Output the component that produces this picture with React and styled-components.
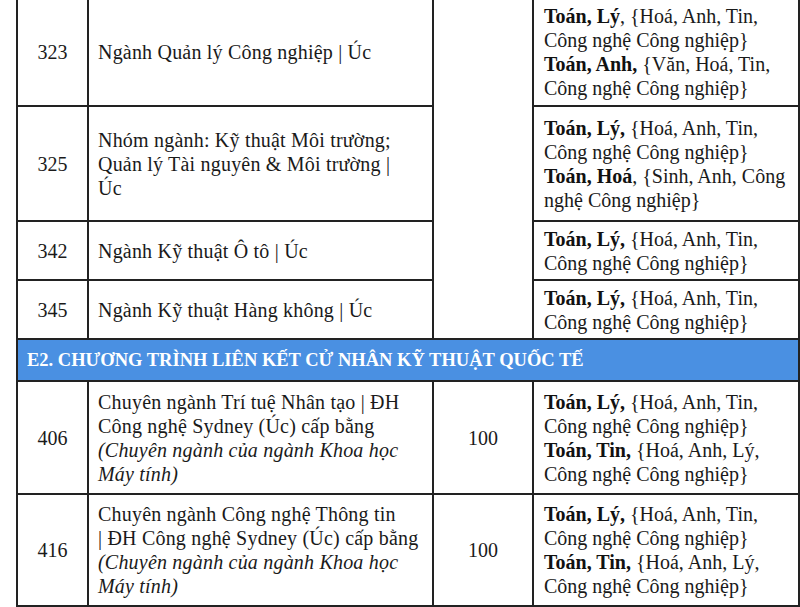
import React from "react";
import styled, { createGlobalStyle } from "styled-components";

const Global = createGlobalStyle`
  html, body { margin: 0; padding: 0; background: #fff; }
  body { overflow: hidden; }
`;

const Page = styled.div`
  width: 800px;
  height: 607px;
  overflow: hidden;
  background: #fff;
`;

const Table = styled.table`
  margin: -4px 0 0 16px;
  width: 782px;
  border-collapse: collapse;
  table-layout: fixed;
  font-family: "Liberation Serif", "DejaVu Serif", serif;
  font-size: 20px;
  line-height: 24px;
  color: #1a1a1a;
  border: 2px solid #222;
`;

const Col = styled.col`
  width: ${(p) => p.$w}px;
`;

const Row = styled.tr`
  height: ${(p) => p.$h}px;
`;

const Cell = styled.td`
  border: 2px solid #222;
  vertical-align: middle;
  padding: 4px 9px;
`;

const CodeCell = styled(Cell)`
  text-align: center;
`;

const NameCell = styled(Cell)`
  text-align: left;
  white-space: nowrap;
  letter-spacing: 0.2px;
`;

const QuotaCell = styled(Cell)`
  text-align: center;
`;

const SubjectCell = styled(Cell)`
  padding-left: 10px;
  white-space: nowrap;
`;

const SectionCell = styled.td`
  border: 2px solid #222;
  background: #4a90e2;
  color: #fff;
  font-size: 18.5px;
  font-weight: 700;
  padding: 0 9px;
  white-space: nowrap;
`;

const B = styled.b`
  font-weight: 700;
  color: #111;
`;

const I = styled.i`
  font-style: italic;
`;

const Line = styled.div``;

const Subjects = ({ groups }) => (
  <>
    {groups.map((g, i) =>
      g.map((l, j) => (
        <Line key={i + "-" + j}>
          {l.b && <B>{l.b}</B>}
          {l.t}
        </Line>
      ))
    )}
  </>
);

const CNCN = "Công nghệ Công nghiệp}";

export default function App() {
  return (
    <Page>
      <Global />
      <Table>
        <colgroup>
          <Col $w={71} />
          <Col $w={345} />
          <Col $w={100} />
          <Col $w={266} />
        </colgroup>
        <tbody>
          <Row $h={109}>
            <CodeCell>323</CodeCell>
            <NameCell>Ngành Quản lý Công nghiệp | Úc</NameCell>
            <QuotaCell rowSpan={4} />
            <SubjectCell>
              <Subjects
                groups={[
                  [{ b: "Toán, Lý", t: ", {Hoá, Anh, Tin," }, { t: CNCN }],
                  [{ b: "Toán, Anh,", t: " {Văn, Hoá, Tin," }, { t: CNCN }],
                ]}
              />
            </SubjectCell>
          </Row>
          <Row $h={115}>
            <CodeCell>325</CodeCell>
            <NameCell>
              Nhóm ngành: Kỹ thuật Môi trường;
              <br />
              Quản lý Tài nguyên &amp; Môi trường |
              <br />
              Úc
            </NameCell>
            <SubjectCell>
              <Subjects
                groups={[
                  [{ b: "Toán, Lý,", t: " {Hoá, Anh, Tin," }, { t: CNCN }],
                  [
                    { b: "Toán, Hoá", t: ", {Sinh, Anh, Công" },
                    { t: "nghệ Công nghiệp}" },
                  ],
                ]}
              />
            </SubjectCell>
          </Row>
          <Row $h={59}>
            <CodeCell>342</CodeCell>
            <NameCell>Ngành Kỹ thuật Ô tô | Úc</NameCell>
            <SubjectCell>
              <Subjects
                groups={[[{ b: "Toán, Lý,", t: " {Hoá, Anh, Tin," }, { t: CNCN }]]}
              />
            </SubjectCell>
          </Row>
          <Row $h={59}>
            <CodeCell>345</CodeCell>
            <NameCell>Ngành Kỹ thuật Hàng không | Úc</NameCell>
            <SubjectCell>
              <Subjects
                groups={[[{ b: "Toán, Lý,", t: " {Hoá, Anh, Tin," }, { t: CNCN }]]}
              />
            </SubjectCell>
          </Row>
          <Row $h={42}>
            <SectionCell colSpan={4}>
              E2. CHƯƠNG TRÌNH LIÊN KẾT CỬ NHÂN KỸ THUẬT QUỐC TẾ
            </SectionCell>
          </Row>
          <Row $h={113}>
            <CodeCell>406</CodeCell>
            <NameCell>
              Chuyên ngành Trí tuệ Nhân tạo | ĐH
              <br />
              Công nghệ Sydney (Úc) cấp bằng
              <br />
              <I>
                (Chuyên ngành của ngành Khoa học
                <br />
                Máy tính)
              </I>
            </NameCell>
            <QuotaCell>100</QuotaCell>
            <SubjectCell>
              <Subjects
                groups={[
                  [{ b: "Toán, Lý,", t: " {Hoá, Anh, Tin," }, { t: CNCN }],
                  [{ b: "Toán, Tin,", t: " {Hoá, Anh, Lý," }, { t: CNCN }],
                ]}
              />
            </SubjectCell>
          </Row>
          <Row $h={112}>
            <CodeCell>416</CodeCell>
            <NameCell>
              Chuyên ngành Công nghệ Thông tin
              <br />
              | ĐH Công nghệ Sydney (Úc) cấp bằng
              <br />
              <I>
                (Chuyên ngành của ngành Khoa học
                <br />
                Máy tính)
              </I>
            </NameCell>
            <QuotaCell>100</QuotaCell>
            <SubjectCell>
              <Subjects
                groups={[
                  [{ b: "Toán, Lý,", t: " {Hoá, Anh, Tin," }, { t: CNCN }],
                  [{ b: "Toán, Tin,", t: " {Hoá, Anh, Lý," }, { t: CNCN }],
                ]}
              />
            </SubjectCell>
          </Row>
        </tbody>
      </Table>
    </Page>
  );
}
